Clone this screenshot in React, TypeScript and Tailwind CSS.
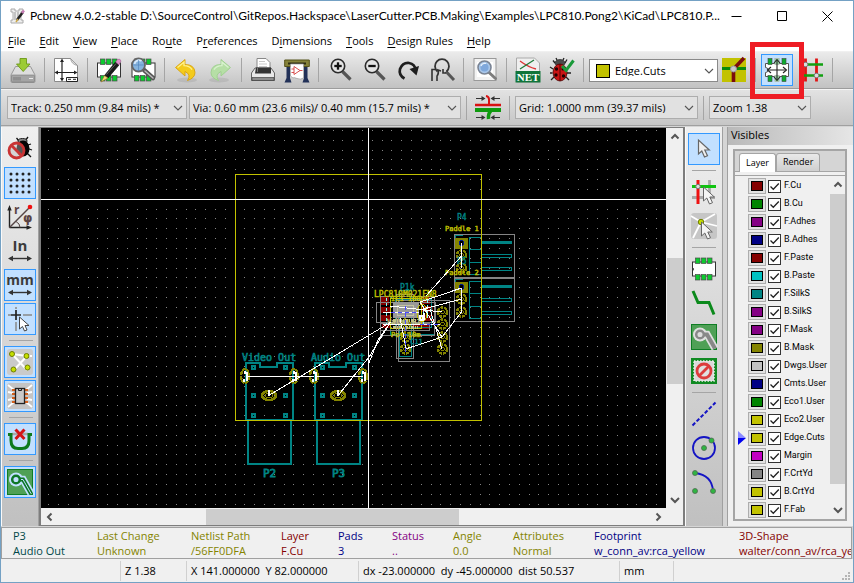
import type { ReactNode } from "react";

const UI = "font-['Open_Sans','Noto_Sans',sans-serif]";

/* ---------- small shared pieces ---------- */

function Ico({ children }: { children: ReactNode }) {
  return (
    <svg width="26" height="26" viewBox="0 0 26 26" fill="none" className="overflow-visible" aria-hidden="true">
      {children}
    </svg>
  );
}

function Tool({ label, on = false, children }: { label: string; on?: boolean; children: ReactNode }) {
  return (
    <button
      type="button"
      aria-label={label}
      aria-pressed={on}
      className={
        "flex size-8 shrink-0 items-center justify-center border " +
        (on ? "border-[#3399ff] bg-[#c2e0ff]" : "border-transparent")
      }
    >
      {children}
    </button>
  );
}

function VSep() {
  return (
    <div className="flex w-[7px] shrink-0 justify-center">
      <div className="h-6 w-px bg-[#a5a5a5]" />
    </div>
  );
}

function HSep() {
  return (
    <div className="flex h-[7px] w-full shrink-0 items-center justify-center">
      <div className="h-px w-6 bg-[#a5a5a5]" />
    </div>
  );
}

function Chevron({ dir, className = "", thick = false }: { dir: "up" | "down" | "left" | "right"; className?: string; thick?: boolean }) {
  const d = {
    up: "M1.5 6.5 5 3l3.5 3.5",
    down: "M1 3l4 4 4-4",
    left: "M6.5 1.5 3 5l3.5 3.5",
    right: "M3.5 1.5 7 5 3.5 8.5",
  }[dir];
  return (
    <svg width="10" height="10" viewBox="0 0 10 10" fill="none" stroke="#555" strokeWidth={thick ? 2 : 1.1} className={className} aria-hidden="true">
      <path d={d} />
    </svg>
  );
}

function Combo({ label, value, width, white = false, swatch = false }: { label: string; value: string; width: string; white?: boolean; swatch?: boolean }) {
  return (
    <div className={"relative h-[23px] shrink-0 " + width}>
      <select
        aria-label={label}
        className={
          "h-full w-full appearance-none border text-[11px] leading-none " +
          (white ? "border-[#8a8a8a] bg-white " : "border-[#adadad] bg-[#e1e1e1] ") +
          (swatch ? "pl-[25px]" : "pl-[3px]")
        }
      >
        <option>{value}</option>
      </select>
      {swatch && <span className="pointer-events-none absolute top-[5px] left-[7px] size-[14px] border border-black bg-[#c2c200]" />}
      <Chevron dir="down" className="pointer-events-none absolute top-[7px] right-1" />
    </div>
  );
}

/* ---------- icons ---------- */

const CHIP_PADS = [5, 11, 17];

function ChipPads() {
  return (
    <g fill="#0ccb2f" stroke="#4a4a4a" strokeWidth="0.7">
      {CHIP_PADS.map((x) => (
        <g key={x}>
          <rect x={x - 0.5} y="2" width="4.5" height="5.5" />
          <rect x={x - 0.5} y="18.5" width="4.5" height="5.5" />
        </g>
      ))}
    </g>
  );
}

function ChipIcon() {
  return (
    <Ico>
      <rect x="1.5" y="6" width="23" height="14" fill="#fff" stroke="#333" />
      <path d="M1.5 11.5a2 2 0 0 1 0 3.5" stroke="#333" />
      <ChipPads />
    </Ico>
  );
}

function SaveIcon() {
  return (
    <Ico>
      <path d="M5.5 9.5h15L25 18v6.5q0 1-1 1H2q-1 0-1-1V18z" fill="#ddd" stroke="#999" />
      <rect x="1.5" y="18" width="23" height="7" rx="1" fill="#a5a5a5" stroke="#777" strokeWidth="0.6" />
      <path d="M4 20v3.500M6 20v3.500M8 20v3.500M10 20v3.500" stroke="#777" strokeWidth="0.9" />
      <path d="M19 21.500h4" stroke="#e8e8e8" />
      <path d="M10 1.500h6.500V7H20l-6.800 7.500L6.500 7H10z" fill="#9ccb35" stroke="#6c9a16" strokeWidth="0.9" />
    </Ico>
  );
}

function PageIcon() {
  return (
    <Ico>
      <path d="M1.500 1.500h16l7 7v16h-23z" fill="#fff" stroke="#8a8a8a" />
      <path d="M17.500 1.500q1 6 7 7z" fill="#ddd" stroke="#999" strokeWidth="0.8" />
      <path d="M9 3v20M3 15.500h20" stroke="#222" strokeWidth="1.200" />
      <path d="M9 1.500 7 5h4zM9 24.500 7 21h4zM1.500 15.500 5 13.500v4zM24.500 15.500 21 13.500v4z" fill="#222" />
      <path d="M13.500 20.500h11v4h-11z" fill="#fff" stroke="#222" />
      <path d="M15 22.300h3M20 22.300h3" stroke="#222" />
    </Ico>
  );
}

function ModEditIcon() {
  return (
    <Ico>
      <rect x="1.500" y="6" width="23" height="14" fill="#fff" stroke="#333" />
      <ChipPads />
      <path d="M8.500 18.500 19.500 5l3.500 3-11 13z" fill="#1b1b1b" stroke="#000" strokeWidth="0.600" />
      <path d="m19.500 5 2-2.500q2.500-1.500 3.500 1.500l-2 4z" fill="#dd92cc" stroke="#8b4a7b" strokeWidth="0.500" />
      <path d="M8.500 18.500 5 25l7-4z" fill="#f3d679" stroke="#8a6a1a" strokeWidth="0.600" />
      <path d="M10.500 17.500 20 6.500" stroke="#777" strokeWidth="0.800" />
    </Ico>
  );
}

function ModViewIcon() {
  return (
    <Ico>
      <rect x="2" y="6" width="23" height="14" fill="#fff" stroke="#333" />
      <ChipPads />
      <path d="m14 13 9 8" stroke="#555" strokeWidth="4.500" strokeLinecap="round" />
      <path d="m15 14 8 7" stroke="#bbb" strokeWidth="1.500" strokeLinecap="round" />
      <circle cx="8.500" cy="8" r="6.500" fill="#86b4dd" stroke="#666" strokeWidth="1.800" />
      <path d="M4.500 7a4.500 4.500 0 0 1 7-3" stroke="#d7e9fa" strokeWidth="1.800" />
      <path d="M3 8h11M8.500 3v11" stroke="#4d80b8" strokeWidth="0.600" />
    </Ico>
  );
}

function UndoIcon({ redo = false }: { redo?: boolean }) {
  return (
    <Ico>
      <g transform={redo ? "matrix(-1 0 0 1 26 0)" : undefined}>
        <ellipse cx="14" cy="23" rx="10" ry="2.500" fill="#000" opacity="0.080" />
        <path
          d="M2.500 10.500 12 2.500v5Q21.500 7.500 22 15.500q0 5.500-7.500 8Q18.500 17.500 12 14.500v4.500z"
          fill={redo ? "#b6dfa6" : "#f4cb1c"}
          stroke={redo ? "#9ccf8c" : "#d8a20d"}
          strokeWidth="0.900"
        />
        <path d="m4.500 10.500 6.500-5.300v3.500q5.500 0 8 4" stroke={redo ? "#d9f2cf" : "#fff08a"} strokeWidth="1.300" />
      </g>
    </Ico>
  );
}

function PrintIcon() {
  return (
    <Ico>
      <path d="M7 1.500h9l4 4V14H7z" fill="#fff" stroke="#888" />
      <path d="M9 4.500h6M9 7h8M9 9.500h8" stroke="#bbb" strokeWidth="0.800" />
      <path d="M5 11h16l3.500 5v7.500h-23V16z" fill="#e8e8e8" stroke="#555" strokeWidth="0.900" />
      <path d="M6 10.500h15v6H5z" fill="#333" />
      <path d="M7.500 11v4" stroke="#777" />
      <path d="M2 20.500h22v3H2z" fill="#8c8c8c" stroke="#444" strokeWidth="0.700" />
    </Ico>
  );
}

function PlotIcon() {
  return (
    <Ico>
      <path d="M2.500 9H6v12l1.500 4.500H.5L2.500 21zM20 9h3.500v12l2 4.500h-7L20 21z" fill="#223158" />
      <path d="M.7 3h24.600v6.500H.7z" fill="#85823a" stroke="#55531b" />
      <path d="M4 5.500h18v2H4z" fill="#2d2c12" />
      <path d="M6.500 7h13v14q-3 2-6.500.5T9 21l-2.500-2z" fill="#fff" stroke="#999" strokeWidth="0.700" />
      <path d="m10 9.500 6 4L10 17.500zM7.500 12H10M7.500 15.500H10M16 13.500h2.500" stroke="#d54040" strokeWidth="0.900" />
    </Ico>
  );
}

function ZoomIcon({ plus = false }: { plus?: boolean }) {
  return (
    <Ico>
      <path d="m15.500 14.500 8 8" stroke="#555" strokeWidth="3.200" />
      <circle cx="11" cy="9" r="6.700" fill="#e4e4e4" stroke="#2b2b2b" strokeWidth="1.600" />
      <path d="M7.300 9h7.400" stroke="#111" strokeWidth="2.300" />
      {plus && <path d="M11 5.300v7.400" stroke="#111" strokeWidth="2.300" />}
    </Ico>
  );
}

function RedrawIcon() {
  return (
    <Ico>
      <path d="M9.500 21.500Q3.500 18 5 12q2.500-6.500 9-6 6 .8 7 8" stroke="#1e1e1e" strokeWidth="2.700" />
      <path d="M14.500 12 24 9l-2.500 9.500z" fill="#1e1e1e" />
    </Ico>
  );
}

function ZoomFitIcon() {
  return (
    <Ico>
      <path d="m17 14.500 8 8.500" stroke="#555" strokeWidth="3" />
      <path d="M8.500 14.500a7 7 0 1 1 9 0" stroke="#333" strokeWidth="1.800" />
      <path d="M3 24V12.500h3M8 24v-5q2-2 1-6l3 1" stroke="#333" strokeWidth="1.600" />
      <path d="M14 12v4h3" stroke="#333" strokeWidth="1.600" />
    </Ico>
  );
}

function FindIcon() {
  return (
    <Ico>
      <rect x="2" y="1.500" width="22" height="22" fill="#f2f2f2" stroke="#999" />
      <path d="M5 5h16v15H5z" fill="#fff" />
      <path d="m16.500 15 7 6.500" stroke="#7d7d7d" strokeWidth="3" strokeLinecap="round" />
      <circle cx="12.500" cy="10.500" r="6.500" fill="#a9c7ea" stroke="#7a8494" strokeWidth="1.600" />
      <circle cx="12.500" cy="10.500" r="4" fill="#7fa8dc" />
      <path d="M9 9a4 4 0 0 1 5-2.500" stroke="#e7f1fc" strokeWidth="1.300" />
    </Ico>
  );
}

function NetIcon() {
  return (
    <Ico>
      <path d="M1.500 1h18l5 5v19h-23z" fill="#efefef" stroke="#aaa" />
      <path d="M5 4q8 6 16 8" stroke="#d33" strokeWidth="1.300" />
      <path d="M5 12 19 3" stroke="#1c7a38" strokeWidth="1.300" />
      <path d="M.5 14h25v11.500H.5z" fill="#10743a" />
      <text x="13" y="24" textAnchor="middle" fill="#fff" fontSize="11" fontWeight="700" fontFamily="'Liberation Serif', serif">
        NET
      </text>
    </Ico>
  );
}

function DrcIcon() {
  return (
    <Ico>
      <path d="M6 6 4 3.500M16 6l2-3.500M4 12l-3-2M3.500 16H1M5 20l-3 3M18 12M17 20l3 3M18 16h4M8 3 7 1M14 3l1-2" stroke="#222" strokeWidth="1.300" />
      <ellipse cx="11" cy="6" rx="5" ry="3.500" fill="#4b4b4b" stroke="#111" strokeWidth="0.600" />
      <ellipse cx="11" cy="15.500" rx="7" ry="8.500" fill="#c91414" stroke="#4a0000" strokeWidth="0.800" />
      <path d="M11 7v17" stroke="#4a0000" strokeWidth="0.900" />
      <g fill="#220000">
        <circle cx="7.500" cy="12" r="1.700" />
        <circle cx="14" cy="12" r="1.500" />
        <circle cx="7" cy="18" r="1.700" />
        <circle cx="14.500" cy="19" r="1.700" />
      </g>
      <path d="m13 9 4 4.500L24.500 3.500" stroke="#1a9a3a" strokeWidth="3" />
    </Ico>
  );
}

function ViaPairIcon() {
  return (
    <Ico>
      <rect x="1" y="1" width="24" height="24" fill="#c2c200" />
      <path d="M1 11.500h24" stroke="#0a8a0a" strokeWidth="3" />
      <path d="M12.500 13v12M14 10.500 23 1" stroke="#7b0d0d" strokeWidth="3.600" />
      <circle cx="12.500" cy="12" r="3" fill="#c9c9c9" stroke="#9a9a9a" />
    </Ico>
  );
}

function ModeFootprintIcon() {
  return (
    <Ico>
      <path d="M1.500 6.500v4a2.500 2.500 0 0 1 0 5v4h23v-13z" fill="#fff" stroke="#555" />
      <g fill="#0cab2f" stroke="#444" strokeWidth="0.600">
        {[4, 11, 18].map((x) => (
          <g key={x}>
            <rect x={x} y="1.500" width="4" height="6" />
            <rect x={x} y="18.500" width="4" height="6" />
          </g>
        ))}
      </g>
      <path d="M10.500 1h5v7.500h-5zM10.500 17.500h5V25h-5z" fill="#e9f7ea" fillOpacity="0.600" />
      <path d="M13 3v20M4 13h18" stroke="#222" strokeWidth="1.100" />
      <path d="m10 6 3-3.500L16 6M10 20l3 3.500 3-3.500M7 10l-3.500 3L7 16M19 10l3.500 3-3.500 3" stroke="#222" strokeWidth="1.100" />
    </Ico>
  );
}

function ModeTrackIcon() {
  return (
    <Ico>
      <path d="M7.500 1.500v23M18.500 1.500v23" stroke="#e01414" strokeWidth="2.800" />
      <path d="M3 7.500h22M3 18.500h22" stroke="#11a011" strokeWidth="2.600" />
      <circle cx="7.500" cy="7.500" r="2.300" fill="#ddd" stroke="#777" />
      <circle cx="18.500" cy="18.500" r="2.300" fill="#ddd" stroke="#777" />
    </Ico>
  );
}

function AutoWidthIcon() {
  return (
    <Ico>
      <path d="M0 10h26" stroke="#d81111" strokeWidth="2.500" />
      <path d="M0 15h26" stroke="#0e9a0e" strokeWidth="4" />
      <path d="M14 10V4.500Q14 1.500 11 1" stroke="#d81111" strokeWidth="2" />
      <path d="M16 16q-3 2-2.500 8" stroke="#0e9a0e" strokeWidth="3.500" />
      <path d="M1 3.500h7M18 3.500h7M1 22.500h7M18 22.500h7" stroke="#333" strokeWidth="1.100" />
      <path d="m10.500 3.500-4-2.500v5zM15.500 3.500l4-2.500v5zM10.500 22.500l-4-2.500v5zM15.500 22.500l4-2.500v5z" fill="#333" />
    </Ico>
  );
}

function NoDrcIcon() {
  return (
    <Ico>
      <path d="M12 5 9.500 2M18 5l3-4M21 9l3-1M22 13l3 1M20 17l4 4" stroke="#111" strokeWidth="1.300" />
      <ellipse cx="15.500" cy="5" rx="4.500" ry="2.500" fill="#888" stroke="#222" />
      <ellipse cx="16" cy="12.500" rx="6.500" ry="8" fill="#050505" />
      <circle cx="9.500" cy="14.500" r="7.500" fill="#bbb" fillOpacity="0.450" stroke="#c93434" strokeWidth="2.800" />
      <path d="m4.500 9.500 10 10" stroke="#c93434" strokeWidth="2.800" />
    </Ico>
  );
}

function GridIcon() {
  return (
    <Ico>
      {[4, 10, 16, 22].map((y) => [4, 10, 16, 22].map((x) => <circle key={`${x}-${y}`} cx={x} cy={y} r="1.500" fill="#222" />))}
    </Ico>
  );
}

function PolarIcon() {
  return (
    <Ico>
      <path d="M2.500 23.500V4M2.500 23.500H22" stroke="#222" strokeWidth="1.400" />
      <path d="M2.500 1 .3 6.500h4.400zM25 23.500l-5.500-2.300v4.600z" fill="#222" />
      <path d="M2.500 23.500 22 4" stroke="#554444" strokeWidth="1.500" />
      <circle cx="23" cy="3" r="2.300" fill="#f01010" />
      <path d="M9 17.500q4 2 4 6" stroke="#554444" />
      <text x="7" y="9.500" fontSize="12" fontWeight="700" fill="#5a4343" fontFamily="'Open Sans', sans-serif">r</text>
      <text x="16" y="18" fontSize="12" fontWeight="700" fill="#5a4343" fontFamily="'DejaVu Sans', sans-serif">φ</text>
    </Ico>
  );
}

function UnitIcon({ text }: { text: string }) {
  return (
    <Ico>
      <text x="13" y="13" textAnchor="middle" fontSize={text === "mm" ? 14 : 15} fontWeight="700" fill="#3b3b3b" fontFamily="'Open Sans', sans-serif">
        {text}
      </text>
      <path d="M3 20.500h20" stroke="#333" strokeWidth="1.400" />
      <path d="m1 20.500 5-2.700v5.400zM25 20.500l-5-2.700v5.400z" fill="#333" />
    </Ico>
  );
}

function CursorIcon() {
  return (
    <Ico>
      <path d="M1 9h3M16 9h9M9 1v2M9 16v9" stroke="#888" strokeWidth="1.500" />
      <path d="M4 9h10M9 4v10" stroke="#222" strokeWidth="1.700" />
      <path d="M12.500 11v12l3-2.500 2 4.500 2.500-1-2-4.500h4z" fill="#fff" stroke="#444" />
    </Ico>
  );
}

function RatsIcon() {
  return (
    <Ico>
      <rect width="26" height="26" rx="3" fill="#cacaca" />
      <path d="M5 5 20 21M6 22 20 7M5 5l15 2h5" stroke="#fff" strokeWidth="2" />
      <g fill="#c6e000" stroke="#6f7d00">
        <circle cx="5" cy="5" r="2.500" />
        <circle cx="19.500" cy="7" r="2.500" />
        <circle cx="6.500" cy="20.500" r="2.500" />
        <circle cx="20.500" cy="18.500" r="2.500" />
      </g>
    </Ico>
  );
}

function ModRatsIcon() {
  return (
    <Ico>
      <rect width="26" height="26" rx="3" fill="#c4c4c4" />
      <path d="m1 2 6 5M1 24l6-5M25 2l-6 5M25 24l-6-5M1 9l5 1M1 17l5-1M25 9l-5 1M25 17l-5-1" stroke="#fff" strokeWidth="1.800" />
      <path d="M5 7h3M5 11h3M5 15h3M5 19h3M18 7h3M18 11h3M18 15h3M18 19h3" stroke="#d3601c" strokeWidth="2" />
      <rect x="8.500" y="5.500" width="9" height="15" fill="#c9c9c9" stroke="#222" strokeWidth="1.300" />
      <path d="M11.500 5.500v2h3v-2" stroke="#222" />
    </Ico>
  );
}

function AutoDelIcon() {
  return (
    <Ico>
      <path d="M5 8h16" stroke="#aaa" strokeWidth="2.500" />
      <path d="M1 8.500h3v6q0 8 7 8h4q7 0 7-8v-6h3" stroke="#0d7a1c" strokeWidth="3" />
      <path d="m8.500 3.500 9 9.500M17.500 3.500l-9 9.500" stroke="#d41616" strokeWidth="3" />
    </Ico>
  );
}

function ZoneIcon({ light = false }: { light?: boolean }) {
  return (
    <Ico>
      <rect x="0.500" y="0.500" width="25" height="25" fill="#4fa056" stroke="#0f7d24" />
      <path d="M9 10.500h7l8 14" stroke={light ? "#c2e0ff" : "#e0e0e0"} strokeWidth="7.500" />
      <circle cx="9" cy="10.500" r="7" fill={light ? "#c2e0ff" : "#e0e0e0"} />
      <path d="M9 10.500h7l8 14" stroke={light ? "#0d7726" : "#888"} strokeWidth="4" />
      <circle cx="9" cy="10.500" r="3.800" fill={light ? "#c2e0ff" : "#ddd"} stroke={light ? "#0d7726" : "#888"} strokeWidth="2.500" />
      {light && <path d="M14 10.500h2l8 14" stroke="#c2e0ff" strokeWidth="1" />}
    </Ico>
  );
}

const POINTER = "M0 0v14l3.300-3 2.700 6 3-1.300-2.700-5.700h4.500z";

function PointerIcon() {
  return (
    <Ico>
      <path d={POINTER} transform="translate(7.500 4)" fill="#f0f0f0" stroke="#666" strokeWidth="1.200" />
    </Ico>
  );
}

function HighlightNetIcon() {
  return (
    <Ico>
      <path d="M18.500 1v23M1 18.500h23" stroke="#a9a9a9" strokeWidth="2.800" />
      <path d="M7 1v24" stroke="#ee1111" strokeWidth="3" />
      <path d="M1 7.500h24" stroke="#11c411" strokeWidth="3" />
      <circle cx="7" cy="7.500" r="2.200" fill="#ddd" stroke="#777" />
      <path d={POINTER} transform="translate(12.500 8)" fill="#f5f5f5" stroke="#666" />
    </Ico>
  );
}

function LocalRatsIcon() {
  return (
    <Ico>
      <rect width="26" height="26" rx="3" fill="#c6c6c6" />
      <path d="M10 9 0 3M10 9 24 1M10 9 2 25M10 9l16 4" stroke="#fff" strokeWidth="1.800" />
      <circle cx="10" cy="9" r="2.700" fill="#c6e000" stroke="#6f7d00" />
      <path d={POINTER} transform="translate(10.500 9)" fill="#f5f5f5" stroke="#666" />
    </Ico>
  );
}

function TrackIcon() {
  return (
    <Ico>
      <path d="m2 1 5 11.500h11l5 12" stroke="#0c8a1c" strokeWidth="3" />
    </Ico>
  );
}

function KeepoutIcon() {
  return (
    <Ico>
      <rect x="1.500" y="1.500" width="23" height="23" fill="#dadada" stroke="#108a22" strokeWidth="3" />
      <rect x="3" y="3" width="20" height="20" stroke="#eee" strokeWidth="1.500" strokeDasharray="1.500 1.500" />
      <circle cx="13" cy="13" r="7" fill="#e0e0e0" stroke="#dc3c3c" strokeWidth="2.800" />
      <path d="m17.500 8.500-9 9" stroke="#dc3c3c" strokeWidth="2.800" />
    </Ico>
  );
}

function DashIcon() {
  return (
    <Ico>
      <path d="M1.500 24.500 24.500 1.500" stroke="#1414c4" strokeWidth="2" strokeDasharray="3.800 2" />
    </Ico>
  );
}

function CircleIcon() {
  return (
    <Ico>
      <circle cx="13" cy="13" r="11" stroke="#1414c4" strokeWidth="1.800" />
      <g fill="#2fb541" stroke="#4f6a52" strokeWidth="0.800">
        <circle cx="13" cy="13" r="2.500" />
        <circle cx="20.500" cy="5.500" r="2.500" />
      </g>
    </Ico>
  );
}

function ArcIcon() {
  return (
    <Ico>
      <path d="M4 4q17 2 18 18" stroke="#1414c4" strokeWidth="1.800" />
      <g fill="#2fb541" stroke="#4f6a52" strokeWidth="0.800">
        <circle cx="4" cy="4" r="2.500" />
        <circle cx="4" cy="22" r="2.500" />
        <circle cx="22" cy="22" r="2.500" />
      </g>
    </Ico>
  );
}

/* ---------- board drawing ---------- */

const TEAL = "#008484";
const OLIVE = "#848400";
const YELLOW = "#c2c200";
const GREY = "#848484";
const MONO = "'DejaVu Sans Mono', monospace";

const DOT_COLS = Array.from({ length: 64 }, (_, i) => Math.round(48.3 + i * 9.8));
const DOT_ROWS = Array.from({ length: 39 }, (_, i) => Math.round(130 + i * 9.83));

function RoundPad({ x, y }: { x: number; y: number }) {
  return (
    <g>
      <circle cx={x} cy={y} r="4.500" stroke={OLIVE} strokeWidth="2.500" strokeDasharray="3 0.700" />
      <circle cx={x} cy={y} r="1.800" stroke={OLIVE} />
    </g>
  );
}

function PaddleHeader({ y, name, reference }: { y: number; name: string; reference: string }) {
  return (
    <g transform={`translate(0 ${y})`}>
      <rect x="454.500" y="0.500" width="60" height="43" stroke={GREY} />
      <path d="M455.500 8V1.500h7" stroke={TEAL} />
      <rect x="469.500" y="3.500" width="12" height="37" stroke={TEAL} />
      <path d="M469.500 15.500h12M469.500 28.500h12" stroke={TEAL} />
      <rect x="482" y="7" width="30" height="3" fill={TEAL} />
      <path d="M482 20.500h29.500v3H482M482 33.500h29.500v3H482" stroke={TEAL} />
      <rect x="455" y="4" width="13" height="11" fill={OLIVE} />
      <circle cx="461.500" cy="9" r="2.500" fill="#000" stroke="#001b8a" />
      <RoundPad x={461.5} y={21} />
      <RoundPad x={461.5} y={34} />
      <text x="457" y="-14" fontSize="8" fill={TEAL} stroke={TEAL} strokeWidth="0.400" fontFamily={MONO}>{reference}</text>
      <text x="445" y="-3" fontSize="7" fill={YELLOW} stroke={YELLOW} strokeWidth="0.400" fontFamily={MONO}>{name}</text>
    </g>
  );
}

function RcaJack({ x, name, reference }: { x: number; name: string; reference: string }) {
  return (
    <g transform={`translate(${x} 0)`}>
      <path d="M0 363h14v4h17v-4h16v57H0zM2 420v44h43v-44" stroke={TEAL} strokeWidth="2" />
      {[7, 39].map((px) =>
        [367, 395, 415].map((py) => <rect key={`${px}-${py}`} x={px - 1} y={py - 1} width="3" height="3" stroke={TEAL} strokeWidth="2" />),
      )}
      {[-1, 48].map((px) => (
        <g key={px}>
          <ellipse cx={px} cy="376" rx="4" ry="7" stroke={OLIVE} strokeWidth="2.500" strokeDasharray="4 0.600" />
          <path d={`M${px} 371v3M${px + 2} 372v9M${px - 1} 379v3`} stroke="#fff" strokeWidth="1.800" />
        </g>
      ))}
      <path d="M0 376.500h48" stroke="#fff" />
      <ellipse cx="23" cy="395.500" rx="7" ry="4.500" stroke={OLIVE} strokeWidth="2.500" />
      <ellipse cx="23" cy="395.500" rx="3.500" ry="2.500" stroke={OLIVE} />
      <text x="-4" y="361" fontSize="10" fill={TEAL} stroke={TEAL} strokeWidth="0.600" fontFamily={MONO}>{name}</text>
      <text x="17" y="477" fontSize="11" fill={TEAL} stroke={TEAL} strokeWidth="0.800" fontFamily={MONO}>{reference}</text>
    </g>
  );
}

function Board() {
  return (
    <svg className="block h-full w-full bg-black" fill="none" role="img" aria-label="Board layout" shapeRendering="crispEdges">
      <g transform="translate(-41 -128)">
        {DOT_ROWS.map((y) => DOT_COLS.map((x) => <rect key={`${x}-${y}`} x={x} y={y} width="1" height="1" fill="#848484" />))}

        <RcaJack x={246} name="Video Out" reference="P2" />
        <RcaJack x={315} name="Audio Out" reference="P3" />
        <path d="M294 376.500h20" stroke="#fff" />
        <rect x="235.500" y="174.500" width="246" height="246" stroke={YELLOW} />
        <PaddleHeader y={234} name="Paddle 1" reference="P4" />
        <PaddleHeader y={278} name="Paddle 2" reference="P5" />
        <path d="M481.500 230v95" stroke={YELLOW} />

        {/* microcontroller and passives */}
        <g fill="#840000">
          <rect x="381" y="297" width="8" height="8" />
          <rect x="380" y="307" width="10" height="6" />
          <rect x="380" y="315" width="10" height="6" />
          <rect x="382" y="323" width="8" height="5" />
          <rect x="422" y="297" width="8" height="7" />
          <rect x="421" y="306" width="12" height="6" />
          <rect x="421" y="315" width="12" height="6" />
          <rect x="412" y="325" width="17" height="4" />
        </g>
        <g stroke={TEAL}>
          <rect x="390.500" y="296.500" width="44" height="38" />
          <rect x="399.500" y="290.500" width="12" height="66" />
          <rect x="395.500" y="299.500" width="36" height="28" />
        </g>
        <g stroke={GREY}>
          <rect x="398.500" y="300.500" width="51" height="61" />
          <rect x="396.500" y="294.500" width="17" height="64" />
          <rect x="376.500" y="302.500" width="59" height="20" />
          <rect x="380.500" y="296.500" width="54" height="39" />
          <rect x="380.500" y="323.500" width="49" height="7" />
        </g>
        {[312, 324, 337, 349].map((y) => (
          <g key={y}>
            <RoundPad x={442.5} y={y} />
            <RoundPad x={405.5} y={y} />
          </g>
        ))}
        <rect x="393" y="302" width="26" height="16" fill="#999" />
        <rect x="397" y="305" width="16" height="10" stroke="#c4c4a0" />
        <rect x="390.500" y="298.500" width="31" height="30" stroke={YELLOW} />
        <path d="M386.500 298v26M423.500 306v18M427 300v20" stroke="#84ffff" strokeDasharray="3 2" />
        <ellipse cx="422" cy="313" rx="5" ry="9" stroke={YELLOW} />
        <path d="M420 316h3v4h-3zM424 313v7M427 307l-3 4" stroke="#fff" strokeWidth="1.500" />
        <path d="M393 320h24M393 327h25" stroke="#c4c484" strokeWidth="3" strokeDasharray="3 1 1 1" />
        <text x="374" y="297" fontSize="8" fill={YELLOW} stroke={YELLOW} strokeWidth="0.400" fontFamily={MONO}>LPC810M021FN8</text>
        <text x="391" y="301" fontSize="7" fill={YELLOW} stroke={YELLOW} strokeWidth="0.400" fontFamily={MONO}>IC1 100nF</text>
        <text x="400" y="290" fontSize="8" fill={TEAL} stroke={TEAL} strokeWidth="0.400" fontFamily={MONO}>P1k</text>
        <text x="387" y="324" fontSize="7" fill="#c4c484" stroke="#c4c484" strokeWidth="0.400" fontFamily={MONO}>Value R1</text>
        <text x="391" y="337" fontSize="7" fill={YELLOW} stroke={YELLOW} strokeWidth="0.400" fontFamily={MONO}>Pot 10m</text>
        <text x="410" y="344" fontSize="7" fill={TEAL} stroke={TEAL} strokeWidth="0.400" fontFamily={MONO}>C11</text>

        {/* ratsnest */}
        <path
          d="M269.500 395 391 322M338.500 395 369 357l21-34M369 363l9-23 12-17M405.500 349 442 337l19.500-25v-13M461.500 256 426 296M461.500 243v25M461.500 288 420 302M461.500 288v11L424 309M383 312h36M383 324h57M430 309l12 40M420 302l22 35M390 306l52 6M400 318l6 30"
          stroke="#fff"
        />
        <path d="M391 312h28M405.500 306v48M420 324h20" stroke="#4a4aff" strokeDasharray="4 3" />
        <path d="M269 390v6M338 390v6" stroke="#fff" strokeWidth="2" />

        {/* cursor */}
        <path d="M368.500 128v9999M41 199.500h9999" stroke="#fff" />
      </g>
    </svg>
  );
}

/* ---------- data ---------- */

const MENUS: [string, string, string][] = [
  ["", "F", "ile"],
  ["", "E", "dit"],
  ["", "V", "iew"],
  ["", "P", "lace"],
  ["Ro", "u", "te"],
  ["P", "r", "eferences"],
  ["D", "i", "mensions"],
  ["", "T", "ools"],
  ["", "D", "esign Rules"],
  ["", "H", "elp"],
];

const LAYERS: [string, string][] = [
  ["F.Cu", "bg-[#840000]"],
  ["B.Cu", "bg-[#008400]"],
  ["F.Adhes", "bg-[#840084]"],
  ["B.Adhes", "bg-[#000084]"],
  ["F.Paste", "bg-[#840000]"],
  ["B.Paste", "bg-[#00c2c2]"],
  ["F.SilkS", "bg-[#008484]"],
  ["B.SilkS", "bg-[#840084]"],
  ["F.Mask", "bg-[#840084]"],
  ["B.Mask", "bg-[#848400]"],
  ["Dwgs.User", "bg-[#c2c2c2]"],
  ["Cmts.User", "bg-[#000084]"],
  ["Eco1.User", "bg-[#008400]"],
  ["Eco2.User", "bg-[#c2c200]"],
  ["Edge.Cuts", "bg-[#c2c200]"],
  ["Margin", "bg-[#c200c2]"],
  ["F.CrtYd", "bg-[#848484]"],
  ["B.CrtYd", "bg-[#c2c200]"],
  ["F.Fab", "bg-[#c2c200]"],
];

const INFO: [string, string, string][] = [
  ["P3", "Audio Out", "text-[#004848]"],
  ["Last Change", "Unknown", "text-[#848400]"],
  ["Netlist Path", "/56FF0DFA", "text-[#848400]"],
  ["Layer", "F.Cu", "text-[#840000]"],
  ["Pads", "3", "text-[#000084]"],
  ["Status", "..", "text-[#840084]"],
  ["Angle", "0.0", "text-[#848400]"],
  ["Attributes", "Normal", "text-[#848400]"],
  ["Footprint", "w_conn_av:rca_yellow", "text-[#000084]"],
  ["3D-Shape", "walter/conn_av/rca_yellow.wrl", "text-[#840000]"],
];

/* ---------- window parts ---------- */

function TitleBar() {
  return (
    <header className="flex h-[30px] shrink-0 items-center bg-white pl-[9px]">
      <svg width="15" height="16" viewBox="0 0 15 16" fill="none" className="mr-[5px] shrink-0" aria-hidden="true">
        <path d="M1 1h4v2h4V1h4v3h-2v8h2v3H1v-3h2V4H1z" fill="#eee" stroke="#aaa" />
        <path d="M5 4v8M8 4v8" stroke="#999" />
        <path d="M7 12 13 4" stroke="#222" strokeWidth="2.500" />
        <path d="m12 5 2-2.500" stroke="#c77db5" strokeWidth="2.500" />
        <path d="m6 14 2-3" stroke="#caa646" strokeWidth="1.500" />
      </svg>
      <h1 className="min-w-0 flex-1 overflow-hidden font-['Lato','Open_Sans',sans-serif] text-[12px] whitespace-nowrap">
        Pcbnew 4.0.2-stable D:\SourceControl\GitRepos.Hackspace\LaserCutter.PCB.Making\Examples\LPC810.Pong2\KiCad\LPC810.P...
      </h1>
      <div className="flex shrink-0 justify-end gap-3 pr-[9px]">
        <button type="button" aria-label="Minimize" className="flex h-7 w-[33px] items-center justify-end pr-3 pl-0">
          <svg width="11" height="11" viewBox="0 0 11 11" stroke="#000"><path d="M0.500 5.500h10" /></svg>
        </button>
        <button type="button" aria-label="Maximize" className="flex h-7 w-[33px] items-center justify-center">
          <svg width="11" height="11" viewBox="0 0 11 11" fill="none" stroke="#000"><path d="M0.500 0.500h9v9h-9z" /></svg>
        </button>
        <button type="button" aria-label="Close" className="flex h-7 w-[33px] items-center justify-center">
          <svg width="11" height="11" viewBox="0 0 11 11" stroke="#000"><path d="m0.500 0.500 10 10M10.500 0.500l-10 10" /></svg>
        </button>
      </div>
    </header>
  );
}

function MainToolbar() {
  return (
    <div className="flex h-[38px] shrink-0 items-center gap-[2px] border-t border-b border-t-[#f0f0f0] border-b-[#9c9c9c] bg-linear-to-b from-[#ebebeb] to-[#c2c2c2] pl-[6px]">
      <Tool label="Save board"><SaveIcon /></Tool>
      <VSep />
      <Tool label="Page settings"><PageIcon /></Tool>
      <VSep />
      <Tool label="Footprint editor"><ModEditIcon /></Tool>
      <Tool label="Footprint viewer"><ModViewIcon /></Tool>
      <VSep />
      <Tool label="Undo"><UndoIcon /></Tool>
      <Tool label="Redo"><UndoIcon redo /></Tool>
      <VSep />
      <Tool label="Print"><PrintIcon /></Tool>
      <Tool label="Plot"><PlotIcon /></Tool>
      <VSep />
      <Tool label="Zoom in"><ZoomIcon plus /></Tool>
      <Tool label="Zoom out"><ZoomIcon /></Tool>
      <Tool label="Redraw view"><RedrawIcon /></Tool>
      <Tool label="Zoom auto"><ZoomFitIcon /></Tool>
      <VSep />
      <Tool label="Find"><FindIcon /></Tool>
      <VSep />
      <Tool label="Read netlist"><NetIcon /></Tool>
      <Tool label="Design rules check"><DrcIcon /></Tool>
      <VSep />
      <div className="flex shrink-0 items-center">
        <Combo label="Active layer" value="Edge.Cuts" width="w-[129px]" white swatch />
        <Tool label="Layer pair"><ViaPairIcon /></Tool>
      </div>
      <VSep />
      <div className="relative">
        <Tool label="Footprint mode" on><ModeFootprintIcon /></Tool>
        <div className="pointer-events-none absolute -inset-x-[11px] -top-3 -bottom-[13px] z-10 border-[5px] border-[#ee1c24]" />
      </div>
      <Tool label="Track mode"><ModeTrackIcon /></Tool>
      <VSep />
    </div>
  );
}

function OptionsToolbar() {
  return (
    <div className="flex h-[37px] shrink-0 items-center gap-[2px] border-t border-b border-t-[#f4f4f4] border-b-[#a0a0a0] bg-linear-to-b from-[#e2e2e2] to-[#c6c6c6] pl-[6px]">
      <Combo label="Track width" value="Track: 0.250 mm (9.84 mils) *" width="w-[180px]" />
      <Combo label="Via size" value="Via: 0.60 mm (23.6 mils)/ 0.40 mm (15.7 mils) *" width="w-[272px]" />
      <VSep />
      <Tool label="Auto track width"><AutoWidthIcon /></Tool>
      <VSep />
      <Combo label="Grid" value="Grid: 1.0000 mm (39.37 mils)" width="w-[183px]" />
      <VSep />
      <Combo label="Zoom" value="Zoom 1.38" width="w-[102px]" />
    </div>
  );
}

function LeftToolbar() {
  return (
    <div className="flex w-[38px] shrink-0 flex-col gap-[2px] overflow-hidden border-x border-l-[#fafafa] border-r-[#a0a0a0] bg-linear-to-b from-[#efefef] to-[#c0c0c0] pt-[6px] pl-[2px]">
      <Tool label="Enable design rule checking"><NoDrcIcon /></Tool>
      <Tool label="Hide grid" on><GridIcon /></Tool>
      <Tool label="Polar coordinates"><PolarIcon /></Tool>
      <Tool label="Units in inches"><UnitIcon text="In" /></Tool>
      <Tool label="Units in millimetres" on><UnitIcon text="mm" /></Tool>
      <Tool label="Cursor shape" on><CursorIcon /></Tool>
      <HSep />
      <Tool label="Board ratsnest" on><RatsIcon /></Tool>
      <Tool label="Footprint ratsnest" on><ModRatsIcon /></Tool>
      <HSep />
      <Tool label="Auto delete track" on><AutoDelIcon /></Tool>
      <HSep />
      <Tool label="Show filled zones" on><ZoneIcon light /></Tool>
    </div>
  );
}

function RightToolbar() {
  return (
    <div className="flex w-[38px] shrink-0 flex-col items-center gap-[2px] overflow-hidden border-x border-l-[#fafafa] border-r-[#a0a0a0] bg-linear-to-b from-[#efefef] to-[#c0c0c0] pt-[6px]">
      <Tool label="Select" on><PointerIcon /></Tool>
      <HSep />
      <Tool label="Highlight net"><HighlightNetIcon /></Tool>
      <Tool label="Local ratsnest"><LocalRatsIcon /></Tool>
      <HSep />
      <Tool label="Add footprints"><ChipIcon /></Tool>
      <Tool label="Add tracks and vias"><TrackIcon /></Tool>
      <Tool label="Add filled zones"><ZoneIcon /></Tool>
      <Tool label="Add keepout areas"><KeepoutIcon /></Tool>
      <HSep />
      <Tool label="Add graphic line"><DashIcon /></Tool>
      <Tool label="Add graphic circle"><CircleIcon /></Tool>
      <Tool label="Add graphic arc"><ArcIcon /></Tool>
    </div>
  );
}

function CanvasArea() {
  return (
    <main className="flex min-w-0 flex-1 flex-col border-t border-r-2 border-b border-l-2 border-[#7d7d7d] bg-[#f0f0f0]">
      <div className="flex min-h-0 flex-1">
        <div className="min-w-0 flex-1 overflow-hidden"><Board /></div>
        <div className="flex w-[17px] shrink-0 flex-col pl-px">
          <button type="button" aria-label="Scroll up" className="flex h-[17px] shrink-0 items-center justify-center"><Chevron dir="up" thick /></button>
          <div className="flex flex-1 flex-col">
            <div className="grow-[113]" />
            <div className="grow-[126] bg-[#cdcdcd]" />
            <div className="grow-[107]" />
          </div>
          <button type="button" aria-label="Scroll down" className="flex h-[17px] shrink-0 items-center justify-center"><Chevron dir="down" thick /></button>
        </div>
      </div>
      <div className="flex h-[17px] shrink-0 pt-px pr-[17px]">
        <button type="button" aria-label="Scroll left" className="flex w-[17px] shrink-0 items-center justify-center"><Chevron dir="left" thick /></button>
        <div className="flex flex-1">
          <div className="grow-[148]" />
          <div className="grow-[253] bg-[#cdcdcd]" />
          <div className="grow-[190]" />
        </div>
        <button type="button" aria-label="Scroll right" className="flex w-[17px] shrink-0 items-center justify-center"><Chevron dir="right" thick /></button>
      </div>
    </main>
  );
}

function LayerRow({ name, color }: { name: string; color: string }) {
  return (
    <li className="flex h-[18px] items-center">
      <span className="flex w-[13px] shrink-0">
        {name === "Edge.Cuts" && (
          <svg width="8" height="14" viewBox="0 0 8 14" className="ml-[3px]" aria-hidden="true">
            <path d="M0 0v7h8z" fill="#8c8cff" />
            <path d="M0 14V7h8z" fill="#0000f0" />
          </svg>
        )}
      </span>
      <button type="button" aria-label={`${name} color`} className="flex h-4 w-[18px] shrink-0 items-center justify-center border border-[#adadad] bg-[#e1e1e1]">
        <span className={"h-[10px] w-3 border border-black " + color} />
      </button>
      <label className="flex items-center pl-[2px] font-['Roboto','Open_Sans',sans-serif] text-[9px] whitespace-nowrap">
        <span className="relative mr-[3px] flex">
          <input type="checkbox" defaultChecked className="size-[13px] appearance-none border border-[#333] bg-white" />
          <svg width="13" height="13" viewBox="0 0 13 13" fill="none" stroke="#222" strokeWidth="1.300" className="pointer-events-none absolute inset-0" aria-hidden="true">
            <path d="m2.500 6.500 2.800 2.800L10.800 3.500" />
          </svg>
        </span>
        {name}
      </label>
    </li>
  );
}

function Visibles() {
  return (
    <aside className="flex w-[126px] shrink-0 flex-col border-l border-[#a0a0a0] bg-[#f0f0f0]">
      <h2 className="h-[18px] shrink-0 bg-linear-to-r from-[#b9b9b9] to-[#e6e6e6] pl-[3px] text-[11px] leading-[16px]">Visibles</h2>
      <div className="mr-[6px] mt-1 mb-[5px] ml-[5px] flex min-h-0 flex-1 flex-col border-2 border-[#a5a5a5]">
        <div role="tablist" className="flex h-[21px] shrink-0 items-end border-b border-[#a5a5a5] bg-[#d5d5d5] pl-1">
          <button role="tab" type="button" aria-selected="true" className="-mb-px h-[19px] rounded-t-[3px] border border-b-0 border-[#a5a5a5] bg-white px-[6px] pb-[2px] text-[9px] leading-none">Layer</button>
          <button role="tab" type="button" aria-selected="false" className="h-[18px] rounded-t-[3px] border border-b-0 border-[#a5a5a5] bg-linear-to-b from-[#e9e9e9] to-[#cfcfcf] px-[6px] pb-[2px] text-[9px] leading-none">Render</button>
        </div>
        <div className="mt-[3px] flex min-h-0 flex-1 border-t border-[#a5a5a5]">
          <ul className="min-w-0 flex-1 overflow-hidden pt-px">
            {LAYERS.map(([name, color]) => <LayerRow key={name} name={name} color={color} />)}
          </ul>
          <div className="flex w-[15px] shrink-0 flex-col">
            <button type="button" aria-label="Scroll layers up" className="flex h-[18px] shrink-0 items-center justify-center"><Chevron dir="up" thick /></button>
            <div className="grow-[290] bg-[#cdcdcd]" />
            <div className="grow-[17]" />
            <button type="button" aria-label="Scroll layers down" className="flex h-[18px] shrink-0 items-center justify-center"><Chevron dir="down" thick /></button>
          </div>
        </div>
      </div>
    </aside>
  );
}

export default function App() {
  return (
    <div className={"flex h-screen flex-col overflow-hidden border border-[#74a1c4] bg-[#d5d5d5] text-[11px] text-black " + UI}>
      <TitleBar />
      <nav className="flex h-5 shrink-0 items-center bg-white">
        {MENUS.map(([a, b, c]) => (
          <button key={a + b + c} type="button" className="px-[7px] whitespace-nowrap">
            {a}
            <span className="underline underline-offset-2">{b}</span>
            {c}
          </button>
        ))}
      </nav>
      <MainToolbar />
      <OptionsToolbar />
      <div className="flex min-h-0 flex-1 py-px">
        <LeftToolbar />
        <CanvasArea />
        <RightToolbar />
        <div className="w-1 shrink-0" />
        <Visibles />
      </div>
      <div className="mr-px grid h-8 shrink-0 grid-cols-[84px_94px_90px_57px_54px_61px_60px_81px_145px_1fr] overflow-hidden border border-[#a0a0a0] bg-[#f0f0f0] pl-[11px] leading-[15px]">
        {INFO.map(([title, value, color]) => (
          <div key={title} className={"min-w-0 whitespace-nowrap " + color}>
            <div>{title}</div>
            <div>{value}</div>
          </div>
        ))}
      </div>
      <footer className="flex h-[23px] shrink-0 items-center bg-[#f0f0f0] whitespace-pre">
        <div className="h-5 w-[119px] shrink-0" />
        <div className="h-5 w-[66px] shrink-0 border-l border-[#d0d0d0] pl-1 leading-5">Z 1.38</div>
        <div className="h-5 w-[172px] shrink-0 border-l border-[#d0d0d0] pl-1 leading-5">X 141.000000  Y 82.000000</div>
        <div className="h-5 w-[261px] shrink-0 border-l border-[#d0d0d0] pl-1 leading-5">dx -23.000000  dy -45.000000  dist 50.537</div>
        <div className="h-5 w-[54px] shrink-0 border-l border-[#d0d0d0] pl-1 leading-5">mm</div>
        <div className="flex h-5 flex-1 items-end justify-end border-l border-[#d0d0d0] pr-[2px]">
          <svg width="9" height="9" viewBox="0 0 9 9" fill="#b5b5b5" aria-hidden="true">
            <path d="M6 0h2v2H6zM3 3h2v2H3zM6 3h2v2H6zM0 6h2v2H0zM3 6h2v2H3zM6 6h2v2H6z" />
          </svg>
        </div>
      </footer>
    </div>
  );
}
